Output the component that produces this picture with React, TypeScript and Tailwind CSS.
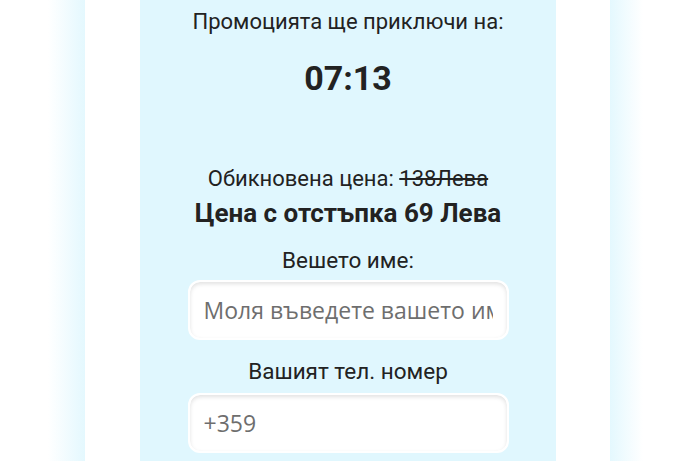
export default function App() {
  return (
    <div className="flex w-[696px] h-[461px] overflow-hidden bg-white font-['Roboto',sans-serif] text-[#222]">
      <div className="w-[48px] shrink-0" />
      <div className="w-[37px] shrink-0 bg-gradient-to-r from-white to-[#e4f8fe]" />
      <div className="w-[55px] shrink-0 bg-white" />

      <div className="w-[416px] shrink-0 bg-[#e0f7fe] flex flex-col items-center">
        <p className="mt-[8px] text-[22px] leading-[28px] whitespace-nowrap">Промоцията ще приключи на:</p>
        <p className="mt-[22px] text-[34px] leading-[40px] font-bold">07:13</p>

        <p className="mt-[67px] text-[22px] leading-[28px] whitespace-nowrap">
          Обикновена цена: <span className="line-through">138Лева</span>
        </p>
        <p className="mt-[4px] text-[26px] leading-[32px] font-bold whitespace-nowrap">Цена с отстъпка 69 Лева</p>

        <label className="mt-[17px] text-[22.5px] leading-[28px]">Вешето име:</label>
        <input
          type="text"
          placeholder="Моля въведете вашето име"
          className="mt-[6px] w-[321px] h-[60px] rounded-xl border-2 border-white bg-white px-[14px] text-[23px] font-['Open_Sans',sans-serif] placeholder:text-[#6e6e6e] shadow-[inset_0_2px_4px_rgba(0,0,0,0.12)] outline-none"
        />

        <label className="mt-[17px] text-[22.5px] leading-[28px]">Вашият тел. номер</label>
        <input
          type="text"
          placeholder="+359"
          className="mt-[8px] w-[321px] h-[60px] rounded-xl border-2 border-white bg-white px-[14px] text-[23px] font-['Open_Sans',sans-serif] placeholder:text-[#6e6e6e] shadow-[inset_0_2px_4px_rgba(0,0,0,0.12)] outline-none"
        />
      </div>

      <div className="w-[54px] shrink-0 bg-white" />
      <div className="w-[33px] shrink-0 bg-gradient-to-r from-[#e4f8fe] to-white" />
      <div className="flex-1" />
    </div>
  );
}
